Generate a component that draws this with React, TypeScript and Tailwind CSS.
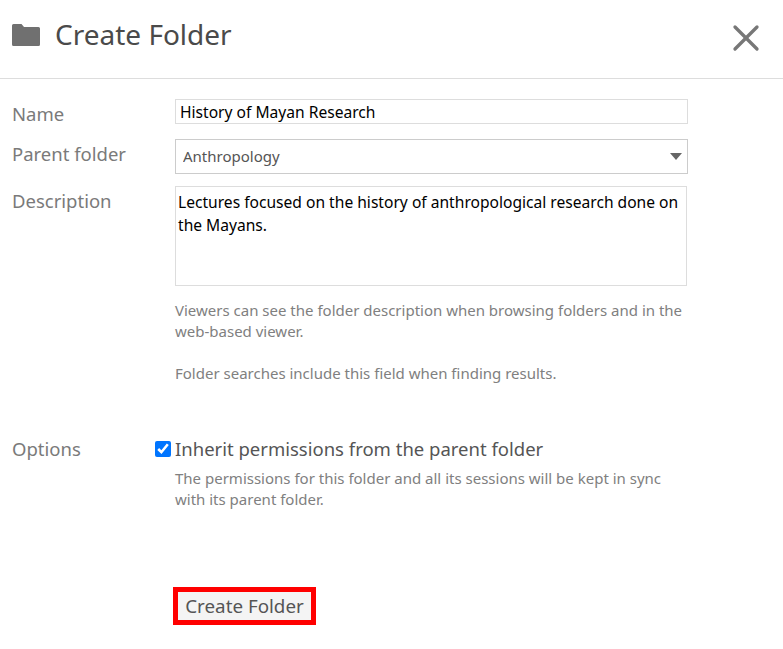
import { X } from 'lucide-react';

const labelClass = 'text-[18.5px] leading-[26px] text-[#7a7a7a]';
const helpClass = 'text-[15px] leading-[21px] text-[#808080]';

export default function App() {
  return (
    <div className="w-[783px] h-[649px] bg-white overflow-hidden font-['Noto_Sans','Open_Sans',sans-serif]">
      <div className="h-[79px] border-b border-[#dddddd] flex items-center justify-between pl-3 pr-[15px] pb-[10px]">
        <div className="flex items-center gap-[15px]">
          <svg width="28" height="22" viewBox="0 0 28 22" className="fill-[#707070] mt-[1px]">
            <path d="M1.5 0h8l2.5 3h14.500a1.500 1.500 0 0 1 1.500 1.500v16a1.500 1.500 0 0 1-1.500 1.500h-25a1.500 1.500 0 0 1-1.500-1.500v-19a1.500 1.500 0 0 1 1.500-1.500z" />
          </svg>
          <h1 className="text-[28px] leading-[40px] font-normal text-[#4a4a4a]">Create Folder</h1>
        </div>
        <button type="button" className="text-[#777777] mt-[7px]">
          <X size={44} strokeWidth={1.8} />
        </button>
      </div>

      <form className="pl-3 pt-5">
        <div className="grid grid-cols-[163px_513px] grid-rows-[25px]">
          <label className={`${labelClass} pt-[2px]`}>Name</label>
          <input
            readOnly
            value="History of Mayan Research"
            className="h-[25px] border border-[#dddddd] px-1 text-[15.6px] text-black outline-none"
          />
        </div>

        <div className="grid grid-cols-[163px_513px] mt-[15px]">
          <label className={`${labelClass} pt-[2px]`}>Parent folder</label>
          <div className="relative">
            <select className="w-full h-[35px] appearance-none border border-[#cccccc] bg-white px-[7px] text-[15px] text-[#555555] outline-none">
              <option>Anthropology</option>
            </select>
            <span className="absolute right-[6px] top-[14px] w-0 h-0 border-x-[6.5px] border-x-transparent border-t-[7px] border-t-[#666666]" />
          </div>
        </div>

        <div className="grid grid-cols-[163px_513px] mt-3">
          <label className={`${labelClass} pt-[2px]`}>Description</label>
          <div>
            <textarea
              readOnly
              defaultValue="Lectures focused on the history of anthropological research done on the Mayans."
              className="block w-[512px] h-[100px] resize-none border border-[#dddddd] px-[2px] py-[4px] text-[15.6px] leading-[23px] text-black outline-none"
            />
            <div className={`${helpClass} mt-[14px] w-[512px]`}>
              <p>Viewers can see the folder description when browsing folders and in the web-based viewer.</p>
              <p className="mt-[21px]">Folder searches include this field when finding results.</p>
            </div>
          </div>
        </div>

        <div className="grid grid-cols-[143px_533px] mt-[52px]">
          <label className={labelClass}>Options</label>
          <div>
            <div className="flex items-center gap-[4px]">
              <input type="checkbox" defaultChecked className="w-4 h-4 m-0 accent-[#0075ff]" />
              <span className="text-[18.5px] leading-[26px] text-[#555555]">Inherit permissions from the parent folder</span>
            </div>
            <p className={`${helpClass} ml-5 mt-[6px] w-[500px]`}>
              The permissions for this folder and all its sessions will be kept in sync with its parent folder.
            </p>
          </div>
        </div>

        <div className="ml-[161px] mt-[77px]">
          <button type="button" className="h-[38px] w-[143px] border-[5px] border-[#ff0000] bg-[#f4f4f4] text-[18.8px] text-[#555555]">
            Create Folder
          </button>
        </div>
      </form>
    </div>
  );
}
